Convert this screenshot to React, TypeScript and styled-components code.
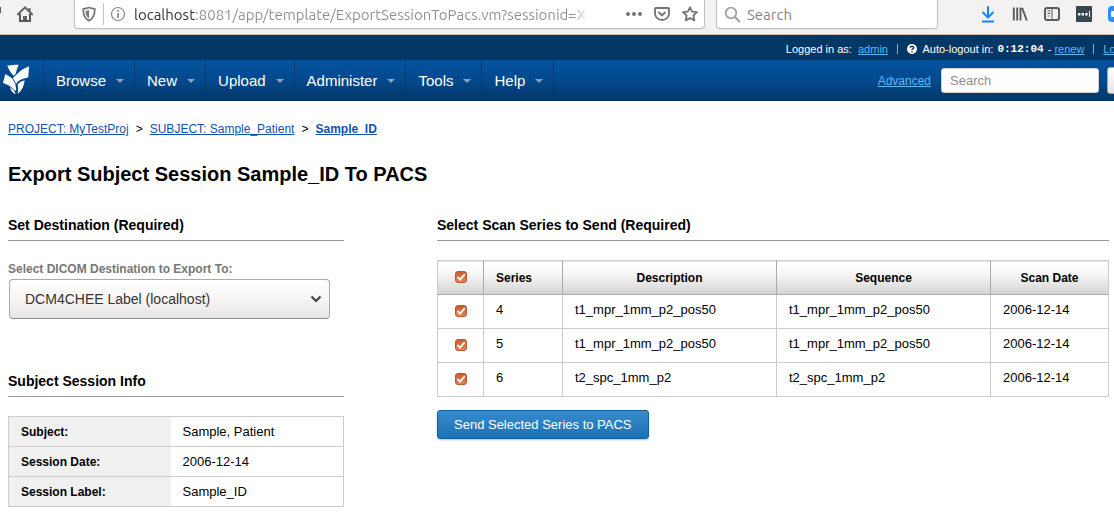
import React, { useState } from "react";
import styled, { createGlobalStyle } from "styled-components";

const sans = `"Liberation Sans", Arial, Helvetica, sans-serif`;
const ui = `Ubuntu, "Noto Sans", "Open Sans", sans-serif`;

const GlobalStyle = createGlobalStyle`
  * { box-sizing: border-box; }
  body {
    margin: 0;
    background: #fff;
    color: #000;
    font-family: ${sans};
    font-size: 13px;
    line-height: 16px;
    overflow-x: hidden;
  }
  a { color: #1053b0; }
`;

/* ---------- browser toolbar ---------- */

const Toolbar = styled.div`
  display: flex;
  align-items: flex-start;
  height: 35px;
  background: #f4f2f0;
  border-bottom: 1px solid #c6bcb6;
  overflow: hidden;
`;

const IconButton = styled.button<{ $color?: string }>`
  display: flex;
  flex: none;
  align-items: center;
  justify-content: center;
  width: 16px;
  height: 28px;
  padding: 0;
  border: 0;
  background: none;
  color: ${(p) => p.$color ?? "#5b5b5a"};
`;

const LeftTools = styled.div`
  display: flex;
  flex: none;
  gap: 14px;
  width: 74px;
`;

const EdgeButton = styled(IconButton)`
  width: 3px;
  justify-content: flex-start;
`;

const Field = styled.div<{ $grow: number }>`
  display: flex;
  align-items: center;
  flex: ${(p) => p.$grow} 1 0;
  min-width: 0;
  height: 29px;
  background: #fff;
  border: 1px solid #c4bfba;
  border-top: 0;
  border-radius: 0 0 4px 4px;
  box-shadow: 0 1px 2px rgba(0, 0, 0, 0.06);
`;

const UrlField = styled(Field)`
  gap: 12px;
  padding: 0 6px;
  margin-right: 11px;
`;

const Separator = styled.span`
  width: 1px;
  height: 22px;
  margin: 0 -6px;
  background: #c4c4c4;
`;

const UrlInput = styled.input`
  flex: 1;
  min-width: 0;
  height: 24px;
  margin-left: -4px;
  padding: 0;
  border: 0;
  outline: 0;
  font: 15px ${ui};
  color: transparent;
  background: linear-gradient(to right, #2e2e2e 61px, #8e8e8e 61px, #8e8e8e 438px, transparent 455px);
  -webkit-background-clip: text;
  background-clip: text;
`;

const SearchField = styled(Field)`
  gap: 6px;
  padding-left: 7px;
`;

const ToolbarInput = styled.input`
  flex: 1;
  min-width: 0;
  height: 24px;
  padding: 0;
  border: 0;
  outline: 0;
  background: none;
  font: 15px ${ui};
  &::placeholder { color: #858585; opacity: 1; }
`;

const RightTools = styled.div`
  display: flex;
  flex: none;
  gap: 16px;
  width: 134px;
  margin-left: 42px;
`;

const Svg = styled.svg`
  display: block;
  flex: none;
`;

/* ---------- site header ---------- */

const UserBar = styled.div`
  display: flex;
  align-items: center;
  justify-content: flex-end;
  height: 25px;
  padding-top: 2px;
  background: #033766;
  color: #fff;
  font-size: 11px;
  white-space: nowrap;
  overflow: hidden;
  a { color: #5cb8f5; }
`;

const UserStatus = styled.div`
  display: flex;
  align-items: center;
  margin-right: -23px;
`;

const Divider = styled.span<{ $color: string }>`
  width: 1px;
  height: 10px;
  margin: 0 9px;
  background: ${(p) => p.$color};
`;

const Clock = styled.strong`
  margin: 0 4px;
  font: bold 11px "Liberation Mono", monospace;
`;

const NavBar = styled.nav`
  display: flex;
  height: 41px;
  background: linear-gradient(#04529e, #03498d 50%, #023667);
  overflow: hidden;
`;

const Logo = styled.a`
  display: flex;
  align-items: center;
  width: 44px;
  border-right: 1px solid #02386b;
`;

const NavItem = styled.button`
  display: flex;
  align-items: center;
  gap: 10px;
  flex: none;
  padding: 0 10px 0 12px;
  border: 0;
  border-right: 1px solid #02386b;
  background: none;
  color: #fff;
  font: 15px ${sans};
`;

const Caret = styled.span`
  border: 4px solid transparent;
  border-top-color: #8da2b8;
  border-bottom: 0;
`;

const SiteSearch = styled.form`
  display: flex;
  align-items: center;
  gap: 8px;
  flex: none;
  margin-left: auto;
  margin-right: -30px;
  a { margin-right: 2px; color: #5cb8f5; font-size: 12px; }
`;

const SiteSearchInput = styled.input`
  width: 158px;
  height: 25px;
  padding: 0 8px;
  border: 1px solid #d0d0d0;
  border-radius: 3px;
  background: #fff;
  font: 13px ${sans};
  &::placeholder { color: #8e8e8e; opacity: 1; }
`;

const GoButton = styled.button`
  width: 37px;
  height: 27px;
  border: 1px solid #aaa;
  border-radius: 3px;
  background: linear-gradient(#fff, #e4e4e4);
`;

/* ---------- page ---------- */

const Page = styled.main`
  padding: 20px 5px 5px 8px;
`;

const Breadcrumbs = styled.nav`
  display: flex;
  gap: 7px;
  font-size: 12px;
`;

const Title = styled.h1`
  margin: 25px 0 29px;
  font-size: 20px;
  line-height: 24px;
`;

const Columns = styled.div`
  display: grid;
  grid-template-columns: minmax(0, 1fr) minmax(0, 2fr);
  column-gap: 93px;
`;

const SectionTitle = styled.h2`
  margin: 0 0 19px;
  padding-bottom: 5px;
  border-bottom: 1px solid #999;
  font-size: 14px;
  line-height: 20px;
`;

const Destination = styled.div`
  padding-top: 1px;
  margin-bottom: 52px;
  label {
    display: block;
    color: #777;
    font-size: 12px;
    font-weight: bold;
    line-height: 16px;
  }
`;

const SelectBox = styled.div`
  display: grid;
  align-items: center;
  margin: 2px 14px 0 1px;
  select, svg { grid-area: 1 / 1; }
  svg { justify-self: end; margin-right: 8px; pointer-events: none; }
`;

const Select = styled.select`
  appearance: none;
  width: 100%;
  height: 40px;
  padding: 0 32px 0 15px;
  border: 1px solid #a9a9a9;
  border-bottom-color: #8f8f8f;
  border-radius: 4px;
  background: linear-gradient(#fff, #f6f5f4 50%, #e8e6e5);
  color: #333;
  font: 14px ${sans};
`;

const InfoTable = styled.table`
  width: 100%;
  border-collapse: collapse;
  border: 1px solid #ccc;
  tr { height: 30px; border-bottom: 1px solid #ccc; }
  th {
    width: 162px;
    padding: 0 12px;
    background: #f0f0f0;
    font-size: 12px;
    text-align: left;
  }
  td { padding: 0 12px; }
`;

const SeriesTable = styled.table`
  width: 100%;
  border-collapse: collapse;
  table-layout: fixed;
  tr { height: 34px; }
  th, td { border: 1px solid #ccc; }
  th {
    padding: 0 12px;
    border-right-color: #aaa;
    border-bottom-color: #aaa;
    background: linear-gradient(#fff, #f5f5f5 40%, #d3d3d3);
    font-size: 12px;
  }
  th:nth-child(2) { text-align: left; }
  th:last-child { border-right-color: #ccc; }
  td { padding: 0 12px 4px; }
  th:first-child, td:first-child { padding: 0 0 2px; }
`;

const Col = styled.col<{ $width?: number }>`
  width: ${(p) => (p.$width ? `${p.$width}px` : "auto")};
`;

const Check = styled.input`
  appearance: none;
  display: block;
  width: 12px;
  height: 12px;
  margin: 0 auto;
  border: 1px solid #b9572f;
  border-radius: 3px;
  background: #fff;
  &:checked {
    background:
      url("data:image/svg+xml,%3Csvg xmlns='http://www.w3.org/2000/svg' viewBox='0 0 10 10'%3E%3Cpath d='M1.5 5l2.6 2.600L8.800 2.200' fill='none' stroke='white' stroke-width='1.8'/%3E%3C/svg%3E"),
      linear-gradient(#cf5a2c, #e58158);
  }
`;

const SubmitButton = styled.button`
  height: 29px;
  margin-top: 13px;
  padding: 0 16px;
  border: 1px solid #14609c;
  border-radius: 3px;
  background: linear-gradient(#3a8bc9, #1a72b8);
  box-shadow: 0 1px 2px rgba(0, 0, 0, 0.25);
  color: #fff;
  font: 13px ${sans};
`;

const menus = ["Browse", "New", "Upload", "Administer", "Tools", "Help"];

const info = [
  ["Subject:", "Sample, Patient"],
  ["Session Date:", "2006-12-14"],
  ["Session Label:", "Sample_ID"],
];

const series = [
  { id: "4", name: "t1_mpr_1mm_p2_pos50", date: "2006-12-14" },
  { id: "5", name: "t1_mpr_1mm_p2_pos50", date: "2006-12-14" },
  { id: "6", name: "t2_spc_1mm_p2", date: "2006-12-14" },
];

function BrowserToolbar() {
  return (
    <Toolbar>
      <LeftTools>
        <EdgeButton aria-label="Reload">
          <Svg width="3" height="16" viewBox="0 0 3 16"><path d="M0 1h1v6H0z" fill="currentColor" /></Svg>
        </EdgeButton>
        <IconButton aria-label="Home">
          <Svg width="16" height="16" viewBox="0 0 16 16" fill="none" stroke="currentColor" strokeWidth="2">
            <path d="M0.8 8.4 8 1.4l7.2 7" strokeLinejoin="round" strokeLinecap="round" />
            <path d="M3 7.5V15h10V7.5M12.5 5V2" />
            <path d="M6.700 15v-4.300h2.600V15M8 12v3" strokeWidth="1.400" />
          </Svg>
        </IconButton>
      </LeftTools>
      <UrlField $grow={637}>
        <IconButton aria-label="Tracking protection" $color="#7b7b7b">
          <Svg width="14" height="16" viewBox="0 0 14 16">
            <path d="M7 1.5C5 2.4 3 2.7 1.3 2.8 1 8 2.5 12.5 7 14.8c4.500-2.300 6-6.800 5.700-12C11 2.700 9 2.400 7 1.500z" fill="none" stroke="currentColor" strokeWidth="1.8" />
            <path d="M7 4v8.400C4.400 10.700 3.700 8 3.600 4.900 4.800 4.800 6 4.500 7 4z" fill="currentColor" />
          </Svg>
        </IconButton>
        <Separator />
        <IconButton aria-label="Site information" $color="#8a8a8a">
          <Svg width="16" height="16" viewBox="0 0 16 16">
            <circle cx="8" cy="8" r="6.500" fill="none" stroke="currentColor" strokeWidth="1.200" />
            <path d="M7.200 7h1.700v5H7.200zM7.200 4h1.700v1.700H7.200z" fill="currentColor" />
          </Svg>
        </IconButton>
        <UrlInput aria-label="Address" readOnly value="localhost:8081/app/template/ExportSessionToPacs.vm?sessionid=X" />
        <IconButton aria-label="Page actions" $color="#6d6d6d">
          <Svg width="16" height="16" viewBox="0 0 16 16" fill="currentColor">
            <circle cx="2" cy="8" r="1.900" /><circle cx="8" cy="8" r="1.900" /><circle cx="14" cy="8" r="1.900" />
          </Svg>
        </IconButton>
        <IconButton aria-label="Save to Pocket" $color="#757575">
          <Svg width="16" height="16" viewBox="0 0 16 16" fill="none" stroke="currentColor" strokeWidth="1.900">
            <path d="M2 2h12a1 1 0 0 1 1 1v4.500a7 6.500 0 0 1-14 0V3a1 1 0 0 1 1-1z" />
            <path d="M5 6.500l3 2.800 3-2.800" strokeLinecap="round" strokeLinejoin="round" />
          </Svg>
        </IconButton>
        <IconButton aria-label="Bookmark" $color="#757575">
          <Svg width="16" height="16" viewBox="0 0 16 16" fill="none" stroke="currentColor" strokeWidth="1.800" strokeLinejoin="round">
            <path d="M8 1.200l2.100 4.400 4.900.6-3.600 3.300.9 4.900L8 12l-4.300 2.400.9-4.900L1 6.200l4.900-.6z" />
          </Svg>
        </IconButton>
      </UrlField>
      <SearchField $grow={220} as="label">
        <Svg width="17" height="17" viewBox="0 0 17 17" fill="none" stroke="#a3a3a3" strokeWidth="1.800">
          <circle cx="7" cy="7" r="5.300" /><path d="M11 11l5 5" strokeWidth="2.200" />
        </Svg>
        <ToolbarInput aria-label="Search the web" placeholder="Search" />
      </SearchField>
      <RightTools>
        <IconButton aria-label="Downloads" $color="#1285ff">
          <Svg width="16" height="18" viewBox="0 0 16 18" fill="none" stroke="currentColor" strokeWidth="2">
            <path d="M8 2v10M3 7.500l5 5 5-5" strokeLinecap="round" strokeLinejoin="round" /><path d="M2 16.500h12" />
          </Svg>
        </IconButton>
        <IconButton aria-label="Library">
          <Svg width="16" height="16" viewBox="0 0 16 16" fill="none" stroke="currentColor" strokeWidth="1.900">
            <path d="M1.800 1.500v13M5.200 1.500v13M8.500 1.500v13M10.200 2l4.600 12.500" />
          </Svg>
        </IconButton>
        <IconButton aria-label="Sidebars">
          <Svg width="16" height="16" viewBox="0 0 16 16" fill="none" stroke="currentColor" strokeWidth="2">
            <rect x="1" y="2" width="14" height="12" rx="2" /><path d="M8 2v12M3.500 5h3M3.500 7.500h3M3.500 10h2" strokeWidth="1" />
          </Svg>
        </IconButton>
        <IconButton aria-label="Password manager">
          <Svg width="16" height="16" viewBox="0 0 16 16">
            <rect width="16" height="16" rx="1" fill="#37474f" />
            <path d="M2 7h2.400v2.400H2zM5.600 7H8v2.400H5.600zM9.200 7h2.400v2.400H9.200zM13 5h1v6h-1z" fill="#fff" />
          </Svg>
        </IconButton>
        <IconButton aria-label="Meetings">
          <Svg width="16" height="16" viewBox="0 0 16 16">
            <rect width="16" height="16" rx="4" fill="#2d8cff" /><rect x="3" y="5" width="7" height="6" rx="1" fill="#fff" />
          </Svg>
        </IconButton>
      </RightTools>
    </Toolbar>
  );
}

function SiteHeader() {
  return (
    <header>
      <UserBar>
        <UserStatus>
          <span>Logged in as: &nbsp;<a href="#admin">admin</a></span>
          <Divider $color="#6fb4e4" />
          <Svg width="10" height="10" viewBox="0 0 10 10">
            <circle cx="5" cy="5" r="5" fill="#fff" />
            <path d="M3.300 3.800c0-2 3.400-2 3.400 0C6.700 5 5 4.900 5 6.100" fill="none" stroke="#033766" strokeWidth="1.400" />
            <path d="M4.300 7h1.400v1.300H4.300z" fill="#033766" />
          </Svg>
          <span>&nbsp; Auto-logout in:</span>
          <Clock>0:12:04</Clock>
          <span>- <a href="#renew">renew</a></span>
          <Divider $color="#e08a68" />
          <a href="#logout">Logout</a>
        </UserStatus>
      </UserBar>
      <NavBar>
        <Logo href="#home" aria-label="Home">
          <Svg width="30" height="35" viewBox="0 0 90 105" fill="#fff">
            <path d="M22 7C33 9 44 4 56 6Q50 18 47 32L41 38Q26 24 22 7z" />
            <path d="M87 10L85 43L65 49Q54 53 48 63Q46 54 38 46Q50 34 60 25Q72 16 87 10z" />
            <path d="M16 33Q32 42 39 50Q48 62 49 80L45 84Q30 66 9 60z" />
            <path d="M53 64Q60 55 74 52Q72 78 53 93Q56 78 53 64z" />
            <path d="M30 72Q40 78 48 94Q34 90 30 72z" />
          </Svg>
        </Logo>
        {menus.map((m) => (
          <NavItem key={m}>{m}<Caret /></NavItem>
        ))}
        <SiteSearch>
          <a href="#advanced">Advanced</a>
          <SiteSearchInput aria-label="Search" placeholder="Search" />
          <GoButton type="button" aria-label="Go" />
        </SiteSearch>
      </NavBar>
    </header>
  );
}

export default function App() {
  const [selected, setSelected] = useState(series.map((s) => s.id));
  const all = selected.length === series.length;
  const toggle = (id: string) =>
    setSelected((ids) => (ids.includes(id) ? ids.filter((i) => i !== id) : [...ids, id]));

  return (
    <>
      <GlobalStyle />
      <BrowserToolbar />
      <SiteHeader />
      <Page>
        <Breadcrumbs aria-label="Breadcrumb">
          <a href="#project">PROJECT: MyTestProj</a>
          <span>&gt;</span>
          <a href="#subject">SUBJECT: Sample_Patient</a>
          <span>&gt;</span>
          <a href="#session"><b>Sample_ID</b></a>
        </Breadcrumbs>
        <Title>Export Subject Session Sample_ID To PACS</Title>
        <Columns>
          <section>
            <SectionTitle>Set Destination (Required)</SectionTitle>
            <Destination>
              <label htmlFor="destination">Select DICOM Destination to Export To:</label>
              <SelectBox>
                <Select id="destination">
                  <option>DCM4CHEE Label (localhost)</option>
                </Select>
                <Svg width="12" height="8" viewBox="0 0 12 8" fill="none" stroke="#444" strokeWidth="2.200">
                  <path d="M1.500 1.500L6 6l4.500-4.500" />
                </Svg>
              </SelectBox>
            </Destination>
            <SectionTitle>Subject Session Info</SectionTitle>
            <InfoTable>
              <tbody>
                {info.map(([k, v]) => (
                  <tr key={k}><th scope="row">{k}</th><td>{v}</td></tr>
                ))}
              </tbody>
            </InfoTable>
          </section>
          <section>
            <SectionTitle>Select Scan Series to Send (Required)</SectionTitle>
            <SeriesTable>
              <colgroup>
                <Col $width={46} />
                <Col $width={79} />
                <Col />
                <Col />
                <Col $width={118} />
              </colgroup>
              <thead>
                <tr>
                  <th>
                    <Check type="checkbox" aria-label="Select all series" checked={all}
                      onChange={() => setSelected(all ? [] : series.map((s) => s.id))} />
                  </th>
                  <th>Series</th>
                  <th>Description</th>
                  <th>Sequence</th>
                  <th>Scan Date</th>
                </tr>
              </thead>
              <tbody>
                {series.map((s) => (
                  <tr key={s.id}>
                    <td>
                      <Check type="checkbox" aria-label={`Series ${s.id}`} checked={selected.includes(s.id)}
                        onChange={() => toggle(s.id)} />
                    </td>
                    <td>{s.id}</td>
                    <td>{s.name}</td>
                    <td>{s.name}</td>
                    <td>{s.date}</td>
                  </tr>
                ))}
              </tbody>
            </SeriesTable>
            <SubmitButton type="button">Send Selected Series to PACS</SubmitButton>
          </section>
        </Columns>
      </Page>
    </>
  );
}
